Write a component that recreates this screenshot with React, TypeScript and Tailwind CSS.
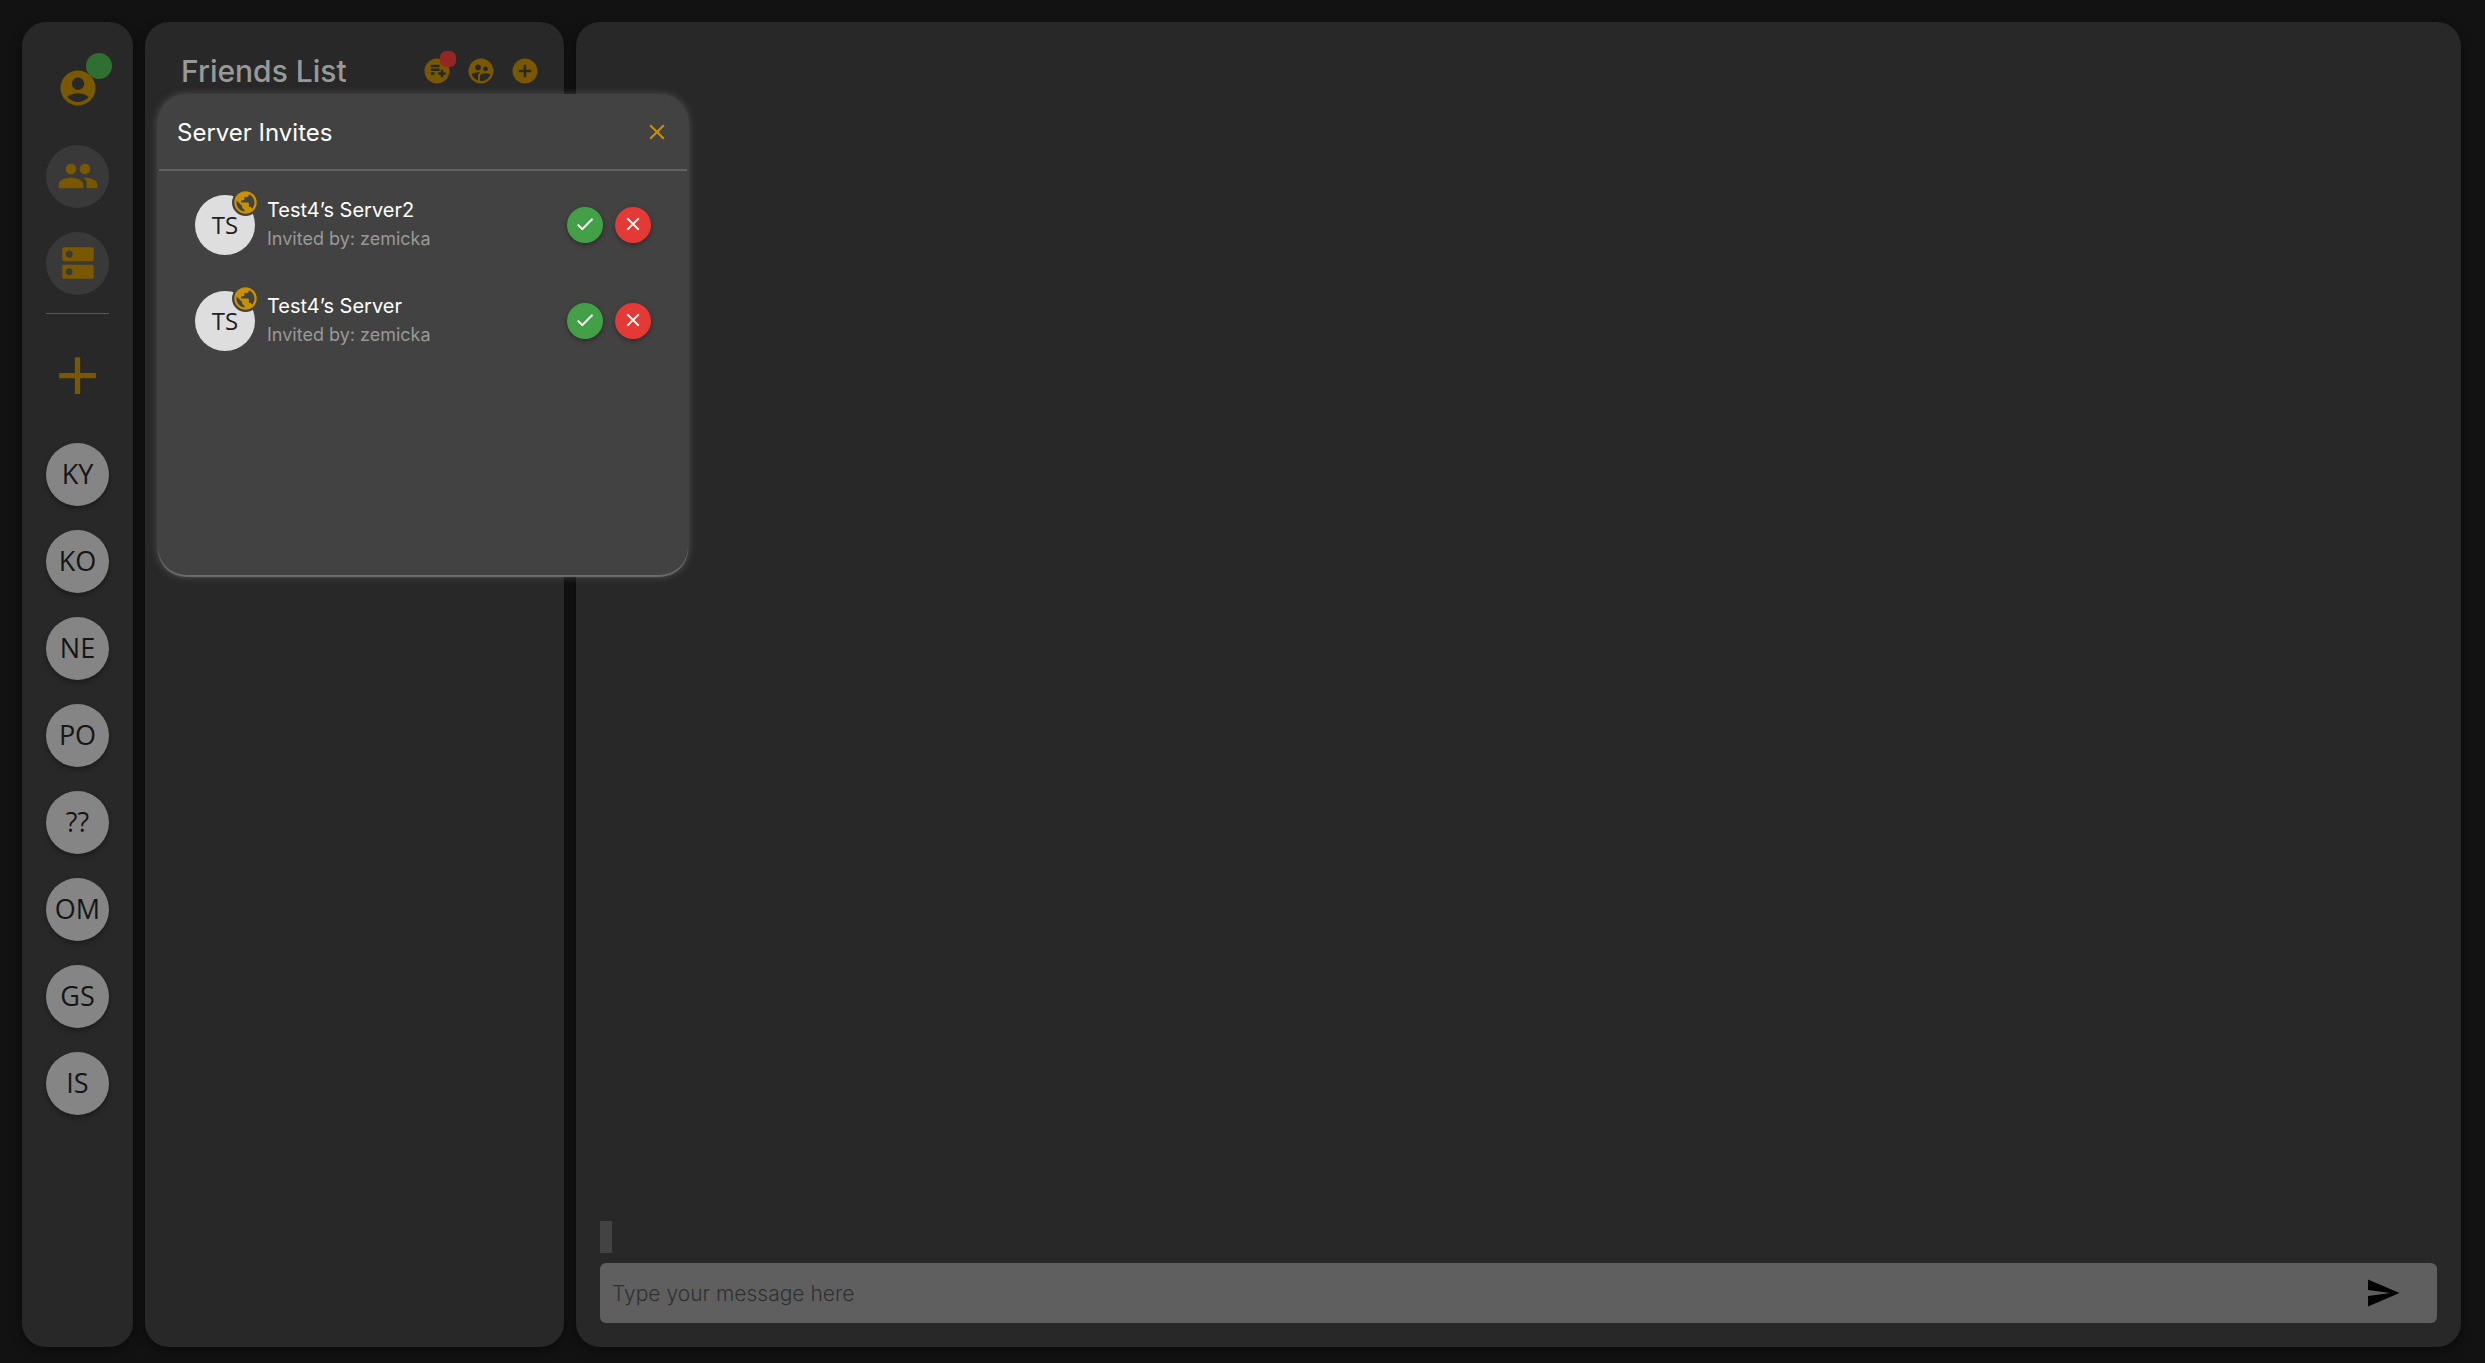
import React from "react";
import {
  MdAccountCircle, MdPeople, MdDns, MdAdd, MdPlaylistAddCircle, MdSupervisedUserCircle,
  MdAddCircle, MdPublic, MdSend, MdCheck, MdClose,
} from "react-icons/md";

const servers = ["KY", "KO", "NE", "PO", "??", "OM", "GS", "IS"];
const invites = [
  { name: "Test4’s Server2", by: "zemicka", initials: "TS" },
  { name: "Test4’s Server", by: "zemicka", initials: "TS" },
];

function Sidebar() {
  return (
    <nav aria-label="Servers" className="flex w-[111px] shrink-0 flex-col items-center rounded-[24px] bg-[#282828] shadow-[0_4px_12px_rgba(0,0,0,0.4)]">
      <button aria-label="Account" className="relative mt-[45px] text-[#7a5800]">
        <MdAccountCircle className="size-[42px]" />
        <span className="absolute -top-[14px] left-[29px] size-[26px] rounded-full bg-[#306f32]" />
      </button>
      <button aria-label="Friends" className="mt-9 flex size-[63px] items-center justify-center rounded-full bg-[#393939] pb-0.5 text-[#7a5800]">
        <MdPeople className="size-[42px]" />
      </button>
      <button aria-label="Direct servers" className="mt-6 flex size-[63px] items-center justify-center rounded-full bg-[#393939] pb-0.5 text-[#7a5800]">
        <MdDns className="size-[42px]" />
      </button>
      <hr className="mt-[18px] w-[63px] border-t border-[#7a5800]" />
      <button aria-label="Add server" className="mt-[30px] text-[#7a5800]">
        <MdAdd className="size-[63px]" />
      </button>
      <ul className="mt-9 flex flex-col gap-6">
        {servers.map((s) => (
          <li key={s} className="flex">
            <button className="flex size-[63px] items-center justify-center rounded-full bg-[#858585] font-['Open_Sans','Noto_Sans',sans-serif] text-[27px] text-[#151515] shadow-[0_3px_5px_rgba(0,0,0,0.3)]">
              {s}
            </button>
          </li>
        ))}
      </ul>
    </nav>
  );
}

function FriendsPanel() {
  return (
    <section className="w-[419px] shrink-0 rounded-[24px] bg-[#282828] shadow-[0_4px_12px_rgba(0,0,0,0.4)]">
      <header className="flex items-center justify-between pt-[31px] pr-6 pl-9">
        <h1 className="text-[30px] leading-9 font-medium text-[#999]">Friends List</h1>
        <div className="flex gap-[14px] text-[#7a5800]">
          <button aria-label="Server invites" className="relative">
            <MdPlaylistAddCircle className="size-[30px]" />
            <span className="absolute -top-[5px] left-[18px] size-4 rounded-[6px] bg-[#942724]" />
          </button>
          <button aria-label="Friend requests"><MdSupervisedUserCircle className="size-[30px]" /></button>
          <button aria-label="Add friend"><MdAddCircle className="size-[30px]" /></button>
        </div>
      </header>
    </section>
  );
}

function ChatPanel() {
  return (
    <main className="flex min-w-0 flex-1 flex-col justify-end rounded-[24px] bg-[#282828] p-6 shadow-[0_4px_12px_rgba(0,0,0,0.4)]">
      <div className="mb-[10px] h-8 w-3 bg-[#434343]" />
      <form className="flex h-[60px] items-center rounded-[6px] bg-[#5f5f5f] pr-9 pl-3" onSubmit={(e) => e.preventDefault()}>
        <input aria-label="Message" placeholder="Type your message here" className="min-w-0 flex-1 bg-transparent pt-0.5 text-[21px] font-light text-black outline-none placeholder:text-[#303030]" />
        <button aria-label="Send" className="text-black"><MdSend className="size-9" /></button>
      </form>
    </main>
  );
}

function InvitesDialog() {
  return (
    <div role="dialog" aria-labelledby="invites-title" className="absolute top-[94px] left-[158px] h-[481px] w-[530px] rounded-[28px] bg-[#424242] px-px shadow-[0_2px_1px_#6c6c6c,0_1px_8px_rgba(120,120,120,0.6)]">
      <header className="flex h-[77px] items-center justify-between border-b-2 border-[#626262] pt-0.5 pr-[17px] pl-[18px]">
        <h2 id="invites-title" className="text-[24px] text-white">Server Invites</h2>
        <button aria-label="Close" className="pb-0.5 text-[#c99000]"><MdClose className="size-[26px]" /></button>
      </header>
      <ul className="flex flex-col gap-9 pt-6 pr-9 pl-9">
        {invites.map((i) => (
          <li key={i.name} className="flex h-[60px] items-center">
            <div className="relative flex size-[60px] items-center justify-center rounded-full bg-[#dedede] font-['Open_Sans','Noto_Sans',sans-serif] text-[24px] text-[#212121]">
              {i.initials}
              <span className="absolute -top-[6px] -right-[4px] rounded-full bg-[#424242] text-[#c99000]"><MdPublic className="size-[27px]" /></span>
            </div>
            <div className="ml-3 flex-1">
              <p className="text-[20px] leading-7 text-white">{i.name}</p>
              <p className="text-[18px] leading-[30px] text-[#999]">Invited by: {i.by}</p>
            </div>
            <div className="flex gap-3 text-white">
              <button aria-label={"Accept " + i.name} className="flex size-9 items-center justify-center rounded-full bg-[#43a047] pb-0.5 shadow-[0_2px_5px_rgba(0,0,0,0.35)]"><MdCheck className="size-[22px]" /></button>
              <button aria-label={"Decline " + i.name} className="flex size-9 items-center justify-center rounded-full bg-[#e53935] pb-0.5 shadow-[0_2px_5px_rgba(0,0,0,0.35)]"><MdClose className="size-[22px]" /></button>
            </div>
          </li>
        ))}
      </ul>
    </div>
  );
}

export default function App() {
  return (
    <div className="relative flex min-h-screen gap-3 bg-[#121212] px-[22px] pt-[22px] pr-6 pb-4 font-[Inter,sans-serif]">
      <Sidebar />
      <FriendsPanel />
      <ChatPanel />
      <InvitesDialog />
    </div>
  );
}
